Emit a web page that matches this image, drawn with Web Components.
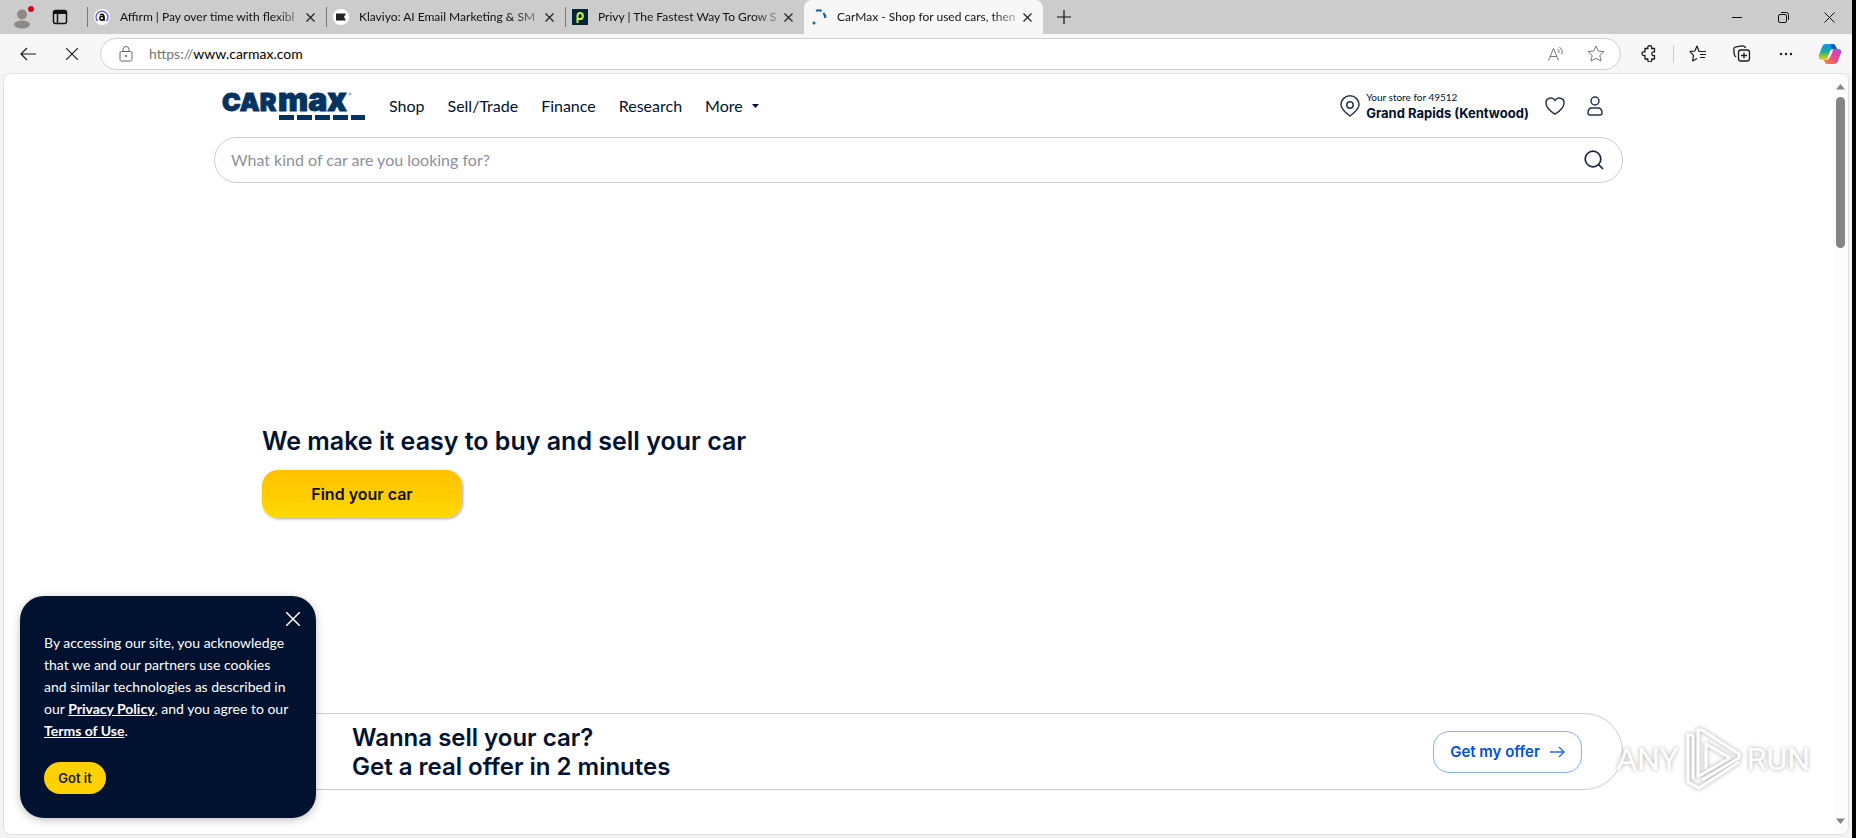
<!DOCTYPE html>
<html lang="en">
<head>
<meta charset="utf-8">
<title>CarMax - Shop for used cars, then buy online or at a store</title>
<style>
    html, body {
        margin: 0;
        height: 100%;
    }
    body {
        box-sizing: border-box;
        padding-right: 4px;
        background: #000;
        --text: Lato, "Liberation Sans", sans-serif;
        --display: Inter, Lato, sans-serif;
        --navy: #001230;
        --yellow: #ffd100;
        color: var(--navy);
        font-family: var(--text);
    }
</style>
</head>
<body>
<browser-window>
    <browser-tab slot="tabs" label="Affirm | Pay over time with flexibl">
        <svg slot="icon" width="16" height="16" viewBox="0 0 16 16"><circle cx="8" cy="8" r="8" fill="#fff"/><path d="M3.6 12.2A6 6 0 1 1 12.4 12.2" fill="none" stroke="#4a4af4" stroke-width="1.2"/><circle cx="7.8" cy="9.2" r="1.9" fill="none" stroke="#111" stroke-width="1.6"/><path d="M5.8 5.8Q10 4 10 8V12" fill="none" stroke="#111" stroke-width="1.6"/></svg>
    </browser-tab>
    <browser-tab slot="tabs" label="Klaviyo: AI Email Marketing &amp; SM">
        <svg slot="icon" width="16" height="16" viewBox="0 0 16 16"><circle cx="8" cy="8" r="8" fill="#fff"/><path d="M3 4.5H13L11 8L13 11.5H3Z" fill="#222"/></svg>
    </browser-tab>
    <browser-tab slot="tabs" label="Privy | The Fastest Way To Grow S">
        <svg slot="icon" width="16" height="16" viewBox="0 0 16 16"><path d="M0 0H16V16H0Z" fill="#05263a"/><path d="M5.5 14V6.5A2.7 3 0 1 1 8 10H6" fill="none" stroke="#c9f23a" stroke-width="2"/></svg>
    </browser-tab>
    <browser-tab slot="tabs" active label="CarMax - Shop for used cars, then">
        <svg slot="icon" width="16" height="16" viewBox="0 0 16 16"><path d="M5 1.8Q8 .6 10.6 2M12.3 4.2Q14.4 6 14.2 9" fill="none" stroke="#1565a9" stroke-width="2.2"/><circle cx="3" cy="14" r="1.5" fill="#1565a9"/></svg>
    </browser-tab>
    <browser-toolbar slot="toolbar"></browser-toolbar>

    <site-header></site-header>
    <hero-banner heading="We make it easy to buy and sell your car">Find your car</hero-banner>
    <offer-bar>
        <span slot="line1">Wanna sell your car?</span>
        <span slot="line2">Get a real offer in 2 minutes</span>
    </offer-bar>

    <cookie-notice slot="overlay"></cookie-notice>
    <run-watermark slot="overlay"></run-watermark>
</browser-window>

<script>
const RESET = `
    * { box-sizing: border-box; }
    button {
        display: flex;
        align-items: center;
        justify-content: center;
        margin: 0;
        padding: 0;
        border: 0;
        background: none;
        color: inherit;
        font: inherit;
        cursor: pointer;
    }
    a { color: inherit; }
    svg { display: block; flex: none; }
`;

class BaseElement extends HTMLElement {
    connectedCallback() {
        if (this.shadowRoot) return;
        this.attachShadow({ mode: 'open' });
        this.shadowRoot.innerHTML = `<style>${RESET}${this.styles()}</style>${this.markup()}`;
    }
}

class BrowserWindow extends BaseElement {
    styles() {
        return `
            :host {
                display: flex;
                flex-direction: column;
                height: 100%;
                overflow: hidden;
                background: #f3f3f3;
            }
            .strip {
                display: flex;
                align-items: center;
                height: 34px;
                flex: none;
                background: #ccc;
                color: #111;
            }
            .lead {
                display: flex;
                gap: 13px;
                width: 87px;
                padding-left: 11px;
            }
            .lead button { width: 24px; height: 28px; }
            .new { width: 42px; height: 34px; }
            .controls { display: flex; margin-left: auto; }
            .controls button { width: 46px; height: 34px; }
            .frame {
                display: flex;
                position: relative;
                flex: 1;
                min-height: 0;
                margin: 0 3px 3px;
                border: 1px solid #e2e2e2;
                border-radius: 8px;
                background: #fff;
                overflow: hidden;
            }
            main {
                display: flex;
                flex-direction: column;
                flex: 1;
                min-width: 0;
                padding: 0 16px;
            }
        `;
    }

    markup() {
        return `
            <div class="strip">
                <div class="lead">
                    <button aria-label="Profile"><svg width="22" height="24" viewBox="0 0 22 24"><circle cx="10" cy="9.5" r="5" fill="#8d8986"/><ellipse cx="10" cy="19.5" rx="8" ry="4" fill="#8d8986"/><circle cx="19" cy="4" r="3" fill="#d5091c"/></svg></button>
                    <button aria-label="Tab actions"><svg width="16" height="16" viewBox="0 0 16 16" fill="none" stroke="#111" stroke-width="1.5"><rect x="1.5" y="1.5" width="13" height="13" rx="2"/><path d="M2 3.5H14" stroke-width="3"/><path d="M5.5 4V14"/></svg></button>
                </div>
                <slot name="tabs"></slot>
                <button class="new" aria-label="New tab"><svg width="14" height="14" viewBox="0 0 14 14" stroke="#111" stroke-width="1.2"><path d="M7 0V14M0 7H14"/></svg></button>
                <div class="controls">
                    <button aria-label="Minimize"><svg width="10" height="10" viewBox="0 0 10 10" stroke="#111"><path d="M0 5.5H10"/></svg></button>
                    <button aria-label="Restore"><svg width="11" height="11" viewBox="0 0 11 11" fill="none" stroke="#111"><rect x=".5" y="2.5" width="8" height="8" rx="1.5"/><path d="M3 .5H8.5Q10.5 .5 10.5 2.5V8"/></svg></button>
                    <button aria-label="Close"><svg width="11" height="11" viewBox="0 0 11 11" stroke="#111"><path d="M.5 .5L10.5 10.5M10.5 .5L.5 10.5"/></svg></button>
                </div>
            </div>
            <slot name="toolbar"></slot>
            <div class="frame">
                <main><slot></slot></main>
                <scroll-rail></scroll-rail>
                <slot name="overlay"></slot>
            </div>
        `;
    }
}

class BrowserTab extends BaseElement {
    styles() {
        return `
            :host {
                display: flex;
                align-items: center;
                align-self: stretch;
                box-sizing: border-box;
                width: 239px;
                padding: 0 8px 0 7px;
                background: linear-gradient(#777, #777) 0 50% / 1px 20px no-repeat;
                font: 12px/16px var(--text);
            }
            :host([active]) {
                border-radius: 8px 8px 0 0;
                background: #f7f7f7;
            }
            .label {
                flex: 1;
                min-width: 0;
                margin-left: 10px;
                white-space: nowrap;
                -webkit-mask-image: linear-gradient(90deg, #000 155px, transparent 190px);
                mask-image: linear-gradient(90deg, #000 155px, transparent 190px);
            }
            button { width: 16px; height: 16px; margin-left: 4px; }
            ::slotted(svg) { display: block; flex: none; }
        `;
    }

    markup() {
        return `
            <slot name="icon"></slot>
            <span class="label">${this.getAttribute('label')}</span>
            <button aria-label="Close tab"><svg width="9" height="9" viewBox="0 0 9 9" stroke="#222" stroke-width="1.2"><path d="M.5 .5L8.5 8.5M8.5 .5L.5 8.5"/></svg></button>
        `;
    }
}

class BrowserToolbar extends BaseElement {
    styles() {
        return `
            :host {
                display: flex;
                align-items: center;
                flex: none;
                height: 39px;
                background: #f7f7f7;
                color: #1b1b1b;
            }
            .nav { display: flex; padding: 0 6px; }
            .nav button { width: 44px; height: 32px; }
            .address {
                display: flex;
                align-items: center;
                flex: 1;
                height: 32px;
                padding: 0 4px 0 18px;
                border: 1px solid #cfcfcf;
                border-radius: 16px;
                background: #fff;
                font: 14px/20px var(--text);
            }
            .url { flex: 1; margin-left: 16px; color: #000; }
            .url span { color: #767676; }
            .address button { width: 40px; height: 28px; color: #767676; }
            .tools { display: flex; align-items: center; padding-left: 6px; }
            .tools button { width: 44px; height: 32px; }
            .tools i { width: 1px; height: 18px; margin: 0 2px; background: #ccc; }
        `;
    }

    markup() {
        return `
            <div class="nav">
                <button aria-label="Back"><svg width="16" height="14" viewBox="0 0 16 14" fill="none" stroke="currentColor" stroke-width="1.2"><path d="M16 7H1M7 1L1 7L7 13"/></svg></button>
                <button aria-label="Stop"><svg width="12" height="12" viewBox="0 0 12 12" stroke="currentColor" stroke-width="1.2"><path d="M0 0L12 12M12 0L0 12"/></svg></button>
            </div>
            <div class="address">
                <svg width="14" height="16" viewBox="0 0 14 16" fill="none" stroke="#666"><rect x="1" y="5.5" width="12" height="9.5" rx="1.5"/><path d="M4 5.5V3.5A3 3 0 0 1 10 3.5V5.5"/><circle cx="7" cy="10" r="1" fill="#555" stroke="none"/></svg>
                <div class="url"><span>https://</span>www.carmax.com</div>
                <button aria-label="Read aloud"><svg width="16" height="16" viewBox="0 0 16 16" fill="none" stroke="currentColor"><path d="M.5 14.5L5.5 2.5L10.5 14.5M2.2 10.5H8.8M9.5 3Q11.5 4.5 11 7M11.5 1Q15.5 4 14 8.5"/></svg></button>
                <button aria-label="Add to favorites"><svg width="18" height="17" viewBox="0 0 18 17" fill="none" stroke="currentColor" stroke-linejoin="round"><path d="M9 1L11.3 6L17 6.6L12.8 10.5L14 16L9 13.3L4 16L5.2 10.5L1 6.6L6.7 6Z"/></svg></button>
            </div>
            <div class="tools">
                <button aria-label="Extensions"><svg width="16" height="17" viewBox="0 0 16 17" fill="none" stroke="currentColor" stroke-width="1.3" stroke-linejoin="round"><path d="M4 3.5H7A2 2 0 1 1 10.5 3.5H13.5V7Q10.8 6.5 10.8 8.8T13.5 10.5V14H10.5A2 2 0 1 1 7 14H4V10.5Q1 10.8 1 8.6T4 6.9Z"/></svg></button>
                <i></i>
                <button aria-label="Favorites"><svg width="18" height="17" viewBox="0 0 18 17" fill="none" stroke="currentColor" stroke-width="1.2" stroke-linejoin="round"><path d="M17 6.5H10L8 1L5.8 6L1 6.6L4.5 10.3L3.6 16L8 13.5M11 9.5H17M11 12.5H16"/></svg></button>
                <button aria-label="Collections"><svg width="18" height="17" viewBox="0 0 18 17" fill="none" stroke="currentColor" stroke-width="1.3"><rect x="5.5" y="5" width="11" height="11" rx="2.5"/><path d="M11 7.5V13.5M8 10.5H14M3 12Q1.5 11 1.2 9L.8 4Q1 2 3 1.8L9 .9Q12 .8 12.5 3"/></svg></button>
                <button aria-label="Settings and more"><svg width="14" height="4" viewBox="0 0 14 4" fill="currentColor"><circle cx="2" cy="2" r="1.2"/><circle cx="7" cy="2" r="1.2"/><circle cx="12" cy="2" r="1.2"/></svg></button>
                <button aria-label="Copilot"><svg width="24" height="22" viewBox="0 0 24 22">
                    <defs>
                        <linearGradient id="cool" x1="0" y1="0" x2="0" y2="1"><stop offset="0" stop-color="#1596e8"/><stop offset=".45" stop-color="#17a9a0"/><stop offset=".7" stop-color="#7cc443"/><stop offset="1" stop-color="#ffd400"/></linearGradient>
                        <linearGradient id="warm" x1="1" y1="0" x2="0" y2="1"><stop offset="0" stop-color="#a34de8"/><stop offset=".5" stop-color="#e8488b"/><stop offset="1" stop-color="#ff8a2a"/></linearGradient>
                    </defs>
                    <path d="M8 1H15Q17 1 18 4L19 6H15Q13 6 12 9L10 15Q9 18 6 17H4Q0 17 1 12L4 4Q5 1 8 1Z" fill="url(#cool)"/>
                    <path d="M13 1H15Q17 1 18 4L19 6H16Q14 6 13 4Z" fill="#1652c9"/>
                    <path d="M16 21H9Q7 21 6 17H9Q11 17 12 13L14 8Q15 5 18 6H20Q24 6 23 10L20 18Q19 21 16 21Z" fill="url(#warm)"/>
                    <path d="M12.5 7.5H15L12 14.5H9.5Z" fill="#fff"/>
                </svg></button>
            </div>
        `;
    }
}

class SiteHeader extends BaseElement {
    styles() {
        return `
            :host {
                display: flex;
                flex-direction: column;
                width: 100%;
                max-width: 1409px;
                margin: 0 auto;
                padding-top: 8px;
                gap: 8px;
            }
            .bar {
                display: flex;
                align-items: center;
                height: 47px;
                padding: 0 16px 0 8px;
            }
            .logo text {
                font-family: var(--display);
                font-weight: 900;
                fill: #053361;
                stroke: #053361;
            }
            nav {
                display: flex;
                align-items: center;
                gap: 23px;
                margin-left: 24px;
                font: 16px/24px var(--text);
            }
            nav a, nav button { text-decoration: none; }
            nav button { gap: 9px; }
            .account { display: flex; align-items: center; margin-left: auto; }
            .store { gap: 6px; text-align: left; }
            .store small { display: block; font: 10px/14px var(--text); }
            .store b { display: block; font: 700 13px/18px var(--display); }
            .icons { display: flex; gap: 16px; margin-left: 14px; }
            .icons button { width: 24px; height: 24px; }
        `;
    }

    markup() {
        return `
            <div class="bar">
                <a href="#" class="logo" aria-label="CarMax home"><svg width="143" height="30" viewBox="0 0 143 30">
                    <text x="0" y="20" font-size="25" stroke-width="1">CAR</text>
                    <text x="56" y="20" font-size="32" stroke-width="1">max</text>
                    <path d="M57 24H72V29H57ZM75 24H90V29H75ZM93 24H108V29H93ZM111 24H126V29H111ZM129 24H143V29H129Z" fill="#053361"/>
                    <circle cx="128" cy="3" r="1" fill="none" stroke="#8fa0b5"/>
                </svg></a>
                <nav>
                    <a href="#">Shop</a>
                    <a href="#">Sell/Trade</a>
                    <a href="#">Finance</a>
                    <a href="#">Research</a>
                    <button>More <svg width="7" height="4" viewBox="0 0 7 4"><path d="M0 0H7L3.5 4Z" fill="#001230"/></svg></button>
                </nav>
                <div class="account">
                    <button class="store">
                        <svg width="20" height="22" viewBox="0 0 20 22" fill="none" stroke="#2a3448" stroke-width="1.5"><path d="M10 21Q1 14.5 1 9.5A9 8.7 0 0 1 19 9.5Q19 14.5 10 21Z"/><circle cx="10" cy="10" r="3.2"/></svg>
                        <span><small>Your store for 49512</small><b>Grand Rapids (Kentwood)</b></span>
                    </button>
                    <div class="icons">
                        <button aria-label="Saved cars"><svg width="20" height="18" viewBox="0 0 20 18" fill="none" stroke="#2a3448" stroke-width="1.5"><path d="M10 17.2Q1 11.5 1 6A4.8 4.8 0 0 1 10 3.5A4.8 4.8 0 0 1 19 6Q19 11.5 10 17.2Z"/></svg></button>
                        <button aria-label="Account"><svg width="16" height="20" viewBox="0 0 16 20" fill="none" stroke="#2a3448" stroke-width="1.5"><circle cx="8" cy="5" r="4"/><path d="M5 12H11Q15 12 15 17Q15 19 13 19H3Q1 19 1 17Q1 12 5 12Z"/></svg></button>
                    </div>
                </div>
            </div>
            <search-box placeholder="What kind of car are you looking for?"></search-box>
        `;
    }
}

class SearchBox extends BaseElement {
    styles() {
        return `
            :host { display: block; }
            form {
                display: flex;
                align-items: center;
                height: 46px;
                padding: 0 16px;
                border: 1px solid #c8cbd0;
                border-radius: 23px;
                background: #fff;
            }
            input {
                flex: 1;
                min-width: 0;
                padding: 0;
                border: 0;
                outline: 0;
                background: none;
                color: inherit;
                font: 16px/24px var(--text);
            }
            input::placeholder { color: #8b919d; opacity: 1; }
            button { width: 24px; height: 24px; }
        `;
    }

    markup() {
        const hint = this.getAttribute('placeholder');
        return `
            <form>
                <input type="search" placeholder="${hint}" aria-label="${hint}">
                <button type="button" aria-label="Search"><svg width="20" height="20" viewBox="0 0 20 20" fill="none" stroke="#1a2540" stroke-width="1.7"><circle cx="9" cy="9" r="7.8"/><path d="M14.5 14.5L19 19"/></svg></button>
            </form>
        `;
    }
}

class HeroBanner extends BaseElement {
    styles() {
        return `
            :host {
                display: flex;
                flex-direction: column;
                align-items: flex-start;
                gap: 12px;
                box-sizing: border-box;
                width: 100%;
                max-width: 1409px;
                min-height: 530px;
                margin: 0 auto;
                padding: 241px 48px 0;
            }
            h1 { margin: 0; font: 600 25px/34px var(--display); }
            button {
                width: 200px;
                height: 48px;
                border-radius: 16px;
                background: linear-gradient(#ffc000, #ffd900);
                box-shadow: 1px 1px 3px rgba(0, 0, 0, 0.35);
                color: #111;
                font: 600 16px/24px var(--display);
            }
        `;
    }

    markup() {
        return `
            <h1>${this.getAttribute('heading')}</h1>
            <button><slot></slot></button>
        `;
    }
}

class OfferBar extends BaseElement {
    styles() {
        return `
            :host {
                display: flex;
                align-items: center;
                justify-content: space-between;
                box-sizing: border-box;
                width: 100%;
                max-width: 1409px;
                min-height: 77px;
                margin: 0 auto;
                padding: 0 40px 0 137px;
                border: 1px solid #c8cbd0;
                border-radius: 39px;
            }
            h2 { margin: 0; font: 600 24px/29px var(--display); }
            h2 slot { display: block; }
            button {
                gap: 10px;
                width: 149px;
                height: 42px;
                border: 1px solid #8fb0ee;
                border-radius: 16px;
                color: #0050e0;
                font: 600 15px/24px var(--display);
            }
        `;
    }

    markup() {
        return `
            <h2><slot name="line1"></slot><slot name="line2"></slot></h2>
            <button>Get my offer <svg width="15" height="12" viewBox="0 0 15 12" fill="none" stroke="#2a6be6" stroke-width="1.4"><path d="M0 6H14M9 1L14 6L9 11"/></svg></button>
        `;
    }
}

class ScrollRail extends BaseElement {
    styles() {
        return `
            :host {
                display: flex;
                flex-direction: column;
                align-items: center;
                width: 15px;
                padding: 10px 0;
                background: #fcfcfc;
            }
            .thumb { width: 9px; height: 151px; margin-top: 7px; border-radius: 5px; background: #858585; }
            .down { margin-top: auto; }
        `;
    }

    markup() {
        return `
            <svg width="9" height="6" viewBox="0 0 9 6"><path d="M0 5.5L4.5 0L9 5.5Z" fill="#858585"/></svg>
            <div class="thumb"></div>
            <svg class="down" width="9" height="6" viewBox="0 0 9 6"><path d="M0 .5L4.5 6L9 .5Z" fill="#858585"/></svg>
        `;
    }
}

class CookieNotice extends BaseElement {
    styles() {
        return `
            :host {
                display: block;
                position: absolute;
                left: 16px;
                bottom: 16px;
                box-sizing: border-box;
                width: 296px;
                padding: 12px 12px 24px 24px;
                border-radius: 24px;
                background: var(--navy);
                box-shadow: 0 2px 8px rgba(0, 0, 0, 0.25);
                color: #fff;
            }
            .close { width: 22px; height: 22px; margin: 0 0 2px auto; }
            p { margin: 0 12px 0 0; font: 14px/22px var(--text); }
            a { font-weight: 700; }
            .accept {
                width: 62px;
                height: 32px;
                margin-top: 20px;
                border-radius: 16px;
                background: var(--yellow);
                color: #1a1a1a;
                font: 600 13px/20px var(--display);
            }
        `;
    }

    markup() {
        return `
            <button class="close" aria-label="Close"><svg width="14" height="14" viewBox="0 0 14 14" stroke="#fff" stroke-width="1.5"><path d="M0 0L14 14M14 0L0 14"/></svg></button>
            <p>By accessing our site, you acknowledge that we and our partners use cookies and similar technologies as described in our <a href="#">Privacy Policy</a>, and you agree to our <a href="#">Terms of Use</a>.</p>
            <button class="accept">Got it</button>
        `;
    }
}

class RunWatermark extends BaseElement {
    styles() {
        return `
            :host {
                display: flex;
                align-items: center;
                gap: 6px;
                position: absolute;
                right: 38px;
                bottom: 43px;
                color: #fff;
                font: 32px/64px Roboto, "Liberation Sans", sans-serif;
                text-shadow: 0 0 4px rgba(0, 0, 0, 0.35);
                pointer-events: none;
            }
            svg { filter: drop-shadow(0 0 2px rgba(0, 0, 0, 0.35)); }
        `;
    }

    markup() {
        return `
            <span>ANY</span>
            <svg width="56" height="64" viewBox="0 0 56 64" fill="none" stroke="#fff" stroke-width="3" stroke-linejoin="round"><path d="M13 49V3H17L54 27V31L17 53M21 42V17L45 31L12 50M8 8H3V55L14 61L54 35M8 8V52"/></svg>
            <span>RUN</span>
        `;
    }
}

customElements.define('browser-window', BrowserWindow);
customElements.define('browser-tab', BrowserTab);
customElements.define('browser-toolbar', BrowserToolbar);
customElements.define('site-header', SiteHeader);
customElements.define('search-box', SearchBox);
customElements.define('hero-banner', HeroBanner);
customElements.define('offer-bar', OfferBar);
customElements.define('scroll-rail', ScrollRail);
customElements.define('cookie-notice', CookieNotice);
customElements.define('run-watermark', RunWatermark);
</script>
</body>
</html>
